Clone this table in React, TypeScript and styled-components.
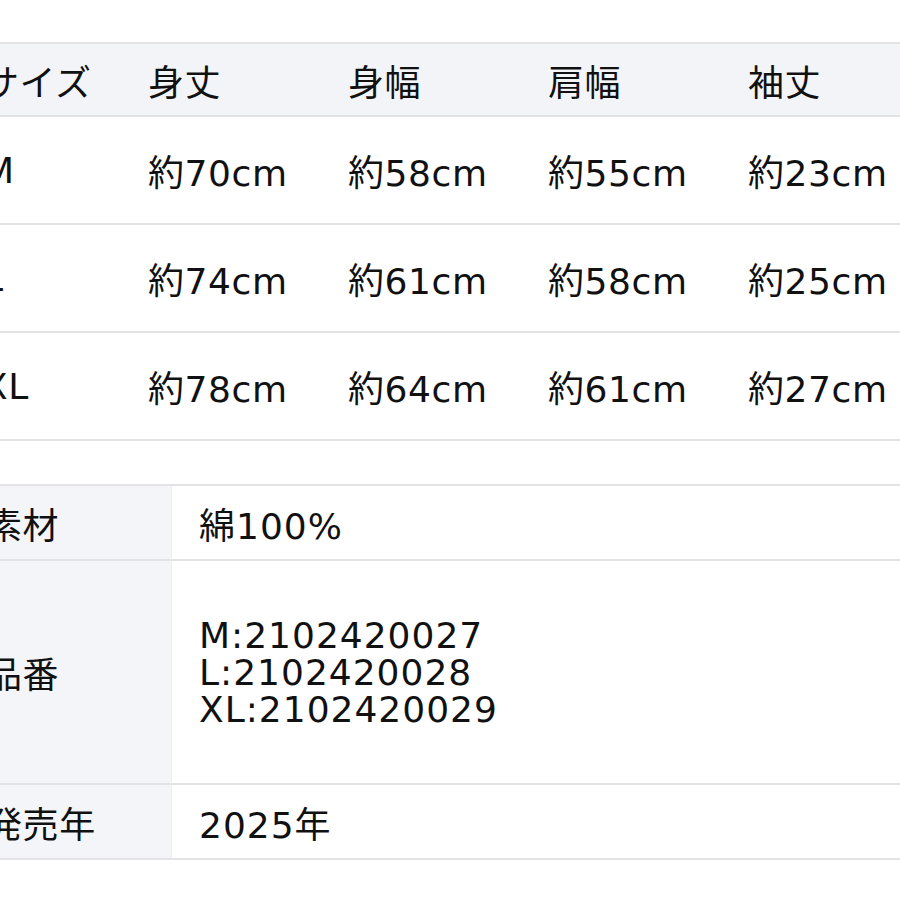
import styled, { createGlobalStyle } from "styled-components"

const sizeHeaders = ["サイズ", "身丈", "身幅", "肩幅", "袖丈"]

const sizeRows = [
  ["M", "約70cm", "約58cm", "約55cm", "約23cm"],
  ["L", "約74cm", "約61cm", "約58cm", "約25cm"],
  ["XL", "約78cm", "約64cm", "約61cm", "約27cm"],
]

const GlobalStyle = createGlobalStyle`
  html, body {
    margin: 0;
    padding: 0;
    background: #ffffff;
  }
  body {
    font-family: "DejaVu Sans", "Noto Sans CJK JP", sans-serif;
    color: #111111;
    overflow: hidden;
  }
`

const Page = styled.div`
  width: 900px;
  height: 900px;
  overflow: hidden;
  padding-top: 42px;
  box-sizing: border-box;
`

const SizeTable = styled.div`
  margin-left: -34px;
  width: 1000px;
  display: grid;
  grid-template-columns: 165px repeat(4, 200px);
  border-top: 2px solid #e3e3e5;
`

const Cell = styled.div<{ $head?: boolean }>`
  height: ${(p) => (p.$head ? "71px" : "106px")};
  padding-left: 17px;
  display: flex;
  align-items: center;
  background: ${(p) => (p.$head ? "#f3f4f8" : "#ffffff")};
  border-bottom: 2px solid #e3e3e5;
  font-size: 36px;
  letter-spacing: 0.6px;
  white-space: nowrap;
`

const InfoTable = styled.div`
  margin-top: 43px;
  margin-left: -34px;
  width: 1000px;
  display: grid;
  grid-template-columns: 206px 1fr;
  border-top: 2px solid #e3e3e5;
`

const Label = styled.div<{ $tall?: boolean }>`
  height: ${(p) => (p.$tall ? "222px" : "73px")};
  padding-left: 20px;
  display: flex;
  align-items: center;
  background: #f4f5f9;
  border-bottom: 2px solid #e3e3e5;
  border-right: 1px solid #eeeef2;
  font-size: 36px;
  letter-spacing: 0.6px;
`

const Value = styled.div<{ $tall?: boolean }>`
  height: ${(p) => (p.$tall ? "222px" : "73px")};
  padding-left: 27px;
  display: flex;
  align-items: center;
  background: #ffffff;
  border-bottom: 2px solid #e3e3e5;
  font-size: 36px;
  letter-spacing: 1px;
`

const Lines = styled.div`
  line-height: 37px;
`

export default function App() {
  return (
    <Page>
      <GlobalStyle />
      <SizeTable>
        {sizeHeaders.map((h) => (
          <Cell $head key={h}>
            {h}
          </Cell>
        ))}
        {sizeRows.map((row) =>
          row.map((v, i) => <Cell key={row[0] + i}>{v}</Cell>)
        )}
      </SizeTable>
      <InfoTable>
        <Label>素材</Label>
        <Value>綿100%</Value>
        <Label $tall>品番</Label>
        <Value $tall>
          <Lines>
            M:2102420027
            <br />
            L:2102420028
            <br />
            XL:2102420029
          </Lines>
        </Value>
        <Label>発売年</Label>
        <Value>2025年</Value>
      </InfoTable>
    </Page>
  )
}
